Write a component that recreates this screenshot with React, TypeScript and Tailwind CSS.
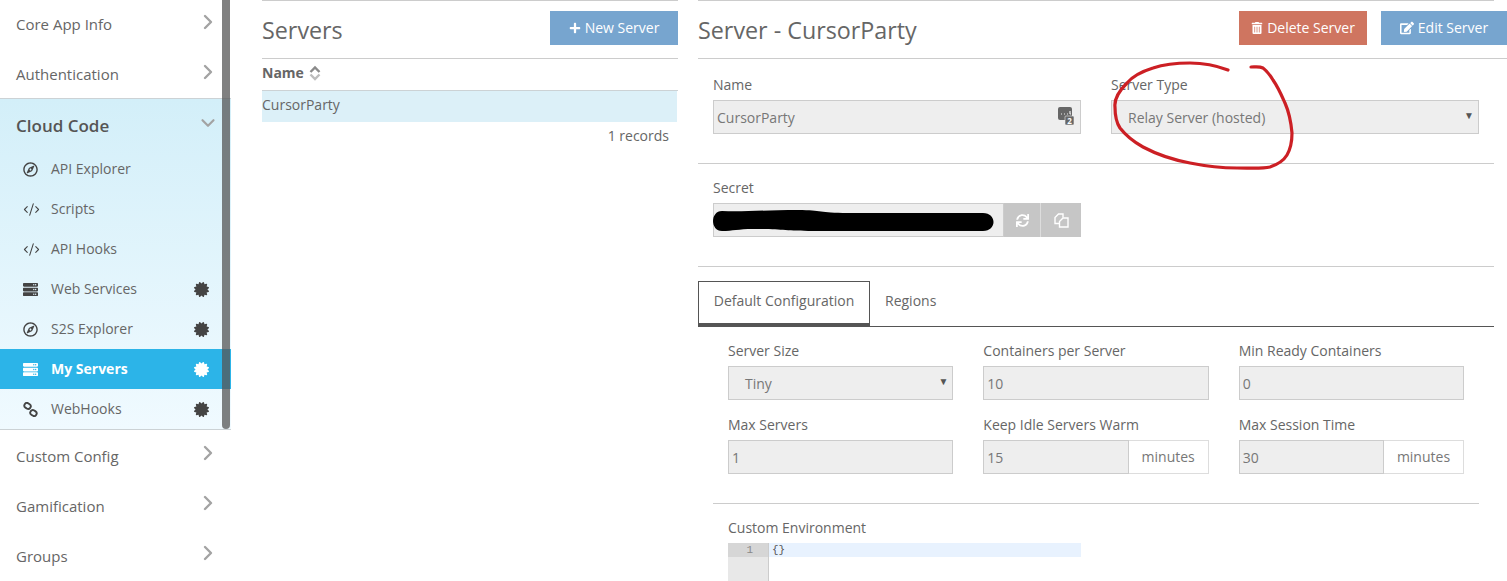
import type { ReactNode } from "react";
import { ChevronRight, ChevronDown, CodeXml } from "lucide-react";
import { FaCertificate, FaEdit, FaPlus, FaRegCompass, FaServer, FaSync, FaTrashAlt } from "react-icons/fa";

function LinkIcon({ className }: { className?: string }) {
  return (
    <svg viewBox="0 0 16 16" className={className} fill="none" stroke="currentColor" strokeWidth="2">
      <rect x="1.5" y="1.5" width="7" height="5.5" rx="2.7" transform="rotate(35 5 4)" />
      <rect x="7.5" y="9" width="7" height="5.5" rx="2.7" transform="rotate(35 11 12)" />
    </svg>
  );
}

function CounterIcon() {
  return (
    <svg viewBox="0 0 16 18" className="h-[18px] w-4 text-[#666]">
      <rect x="0" y="0" width="14" height="13" rx="2" fill="currentColor" />
      <path d="M3 7h1M6 7h1M9 7h1M12 7h1M12 4v3" stroke="#eee" strokeWidth="1.2" />
      <rect x="7" y="9" width="9" height="9" rx="1" fill="currentColor" stroke="#eee" strokeWidth="0.6" />
      <text x="11.5" y="16.6" fontSize="8" fontWeight="700" textAnchor="middle" fill="#fff">2</text>
    </svg>
  );
}

function SortIcon() {
  return (
    <svg viewBox="0 0 12 16" className="h-4 w-3" fill="none" strokeWidth="2.4">
      <path d="M1.5 7 6 2.5 10.5 7" stroke="#8a8a8a" />
      <path d="M1.5 9.5 6 14l4.5-4.5" stroke="#bdbdbd" />
    </svg>
  );
}

function CopyIcon() {
  return (
    <svg viewBox="0 0 15 15" className="h-[15px] w-[15px]" fill="none" stroke="currentColor" strokeWidth="1.4">
      <path d="M9 4.5V1H4.5L1 4.5V10.5H5.5" />
      <path d="M9 5H14V14H5.5V8.5Z" />
    </svg>
  );
}

const subItems = [
  { label: "API Explorer", icon: <FaRegCompass className="h-[15px] w-[15px]" /> },
  { label: "Scripts", icon: <CodeXml className="h-[17px] w-[17px]" strokeWidth={1.5} /> },
  { label: "API Hooks", icon: <CodeXml className="h-[17px] w-[17px]" strokeWidth={1.5} /> },
  { label: "Web Services", icon: <FaServer className="h-[15px] w-[15px]" />, badge: true },
  { label: "S2S Explorer", icon: <FaRegCompass className="h-[15px] w-[15px]" />, badge: true },
  { label: "My Servers", icon: <FaServer className="h-[15px] w-[15px]" />, badge: true, active: true },
  { label: "WebHooks", icon: <LinkIcon className="h-[15px] w-[15px]" />, badge: true },
];

function NavRow({ label, top }: { label: string; top?: boolean }) {
  return (
    <div className={`flex h-[50px] items-center justify-between pl-4 pr-[11px] text-[15px] text-[#666] ${top ? "pb-[2px]" : "pt-[2px]"}`}>
      <span>{label}</span>
      <ChevronRight className={`h-6 w-6 text-[#a3a3a3] ${top ? "mb-1" : "mb-[6px]"}`} strokeWidth={2.4} />
    </div>
  );
}

function Sidebar() {
  return (
    <aside className="relative w-[231px] shrink-0">
      <NavRow label="Core App Info" top />
      <div className="h-[48px]">
        <NavRow label="Authentication" top />
      </div>
      <div className="h-[332px] border-y border-[#ccd2d5] bg-gradient-to-b from-[#d3eff9] to-[#f0faff]">
        <div className="flex h-[50px] w-[222px] items-center justify-between pl-4 pr-[3px] pt-1 text-[#555]">
          <span className="text-[17px] font-semibold">Cloud Code</span>
          <ChevronDown className="mb-[6px] h-[22px] w-[22px] text-[#a3a3a3]" strokeWidth={2.4} />
        </div>
        {subItems.map((item) => (
          <div
            key={item.label}
            className={`flex h-10 items-center pl-[23px] text-sm ${
              item.active ? "bg-[#2cb4e8] font-bold text-white" : "text-[#666]"
            }`}
          >
            <span className={`flex w-[28px] items-center ${item.active ? "text-white" : "text-[#444]"}`}>{item.icon}</span>
            <span className="flex-1">{item.label}</span>
            {item.badge && (
              <FaCertificate className={`mr-[22px] h-[15px] w-[15px] ${item.active ? "text-white" : "text-[#444]"}`} />
            )}
          </div>
        ))}
      </div>
      <NavRow label="Custom Config" />
      <NavRow label="Gamification" />
      <NavRow label="Groups" />
      <div className="absolute left-[222px] top-0 h-[429px] w-[8px] rounded-b bg-[#555]/75" />
    </aside>
  );
}

function Button({ color, icon, children, width }: { color: string; icon: ReactNode; children: ReactNode; width: string }) {
  return (
    <button className={`flex h-[34px] items-center justify-center gap-1 text-sm text-white ${color} ${width}`}>
      {icon}
      {children}
    </button>
  );
}

function ServersPanel() {
  return (
    <section className="ml-[31px] w-[416px] shrink-0 border-t border-[#ccc]">
      <div className="flex h-[58px] items-center justify-between border-b border-[#ccc] pt-px">
        <h2 className="text-[23.3px] text-[#666]">Servers</h2>
        <div className="mb-1">
          <Button color="bg-[#77a5cf]" width="w-32" icon={<FaPlus className="h-3 w-3" />}>New Server</Button>
        </div>
      </div>
      <div className="flex h-[32px] items-center gap-[5px] border-b border-[#ccd2d5] pb-1 text-sm font-bold text-[#666]">
        Name <SortIcon />
      </div>
      <div className="flex h-[31px] w-[415px] items-center bg-[#dcf0f8] pb-[3px] text-sm text-[#666]">CursorParty</div>
      <div className="mt-1 pr-[9px] text-right text-sm text-[#666]">1 records</div>
    </section>
  );
}

const controlClass = "h-[34px] w-full border border-[#ccc] bg-[#eee] text-sm text-[#777] outline-none";

function Field({ label, children, className }: { label: string; children: ReactNode; className?: string }) {
  return (
    <div className={className}>
      <div className="mb-[5px] h-5 text-sm leading-5 text-[#666]">{label}</div>
      {children}
    </div>
  );
}

function TextField({ label, value }: { label: string; value: string }) {
  return (
    <Field label={label}>
      <input readOnly value={value} className={`${controlClass} pl-[3px]`} />
    </Field>
  );
}

function SelectField({ label, value, indent }: { label: string; value: string; indent: string }) {
  return (
    <Field label={label}>
      <div className={`relative flex items-center pt-px ${controlClass} ${indent}`}>
        {value}
        <span className="absolute right-[4px] top-[7px] text-[10px] text-[#555]">▼</span>
      </div>
    </Field>
  );
}

function MinutesField({ label, value }: { label: string; value: string }) {
  return (
    <Field label={label}>
      <div className="flex h-[34px]">
        <input readOnly value={value} className={`${controlClass} min-w-0 flex-1 pl-[3px]`} />
        <div className="flex w-[80px] items-center justify-center border border-l-0 border-[#ddd] text-sm text-[#777]">minutes</div>
      </div>
    </Field>
  );
}

function DetailPanel() {
  return (
    <section className="ml-5 w-[796px] shrink-0 border-t border-[#ccc]">
      <div className="flex h-[58px] w-[809px] items-center justify-between border-b border-[#ccc] pt-px">
        <h2 className="text-[23.3px] text-[#666]">Server - CursorParty</h2>
        <div className="mb-1 flex gap-[14px]">
          <Button color="bg-[#cf7560]" width="w-32" icon={<FaTrashAlt className="h-3 w-3" />}>Delete Server</Button>
          <Button color="bg-[#77a5cf]" width="w-[126px]" icon={<FaEdit className="h-[14px] w-[14px]" />}>Edit Server</Button>
        </div>
      </div>

      <div className="grid h-[105px] grid-cols-[368px_368px] gap-x-[30px] border-b border-[#ccc] pl-[15px] pt-[16px]">
        <Field label="Name">
          <div className="relative">
            <input readOnly value="CursorParty" className={`${controlClass} pl-[3px]`} />
            <span className="absolute right-[7px] top-[7px]"><CounterIcon /></span>
          </div>
        </Field>
        <SelectField label="Server Type" value="Relay Server (hosted)" indent="pl-4" />
      </div>

      <div className="h-[103px] border-b border-[#ccc] pl-[15px] pt-[14px]">
        <Field label="Secret" className="w-[368px]">
          <div className="relative flex h-[34px]">
            <div className="h-full flex-1 border border-[#ccc] bg-[#eee]" />
            <div className="flex w-[37px] items-center justify-center border-r border-[#ddd] bg-[#c6c6c6] text-white"><FaSync className="h-[13px] w-[13px]" /></div>
            <div className="flex w-10 items-center justify-center bg-[#c6c6c6] text-white"><CopyIcon /></div>
            <svg viewBox="0 0 282 22" className="absolute left-0 top-[6px] h-[22px] w-[282px]">
              <path d="M9 2C30 3 50 1 85 1c25 0 20 3 50 3h135c14 0 14 18 0 18H100c-30 0-30-2-60-2-15 0-20 2-31 2C-3 22-3 2 9 2Z" fill="#000" />
            </svg>
          </div>
        </Field>
      </div>

      <div className="mt-[14px] flex h-[46px] border-b border-[#555]">
        <div className="flex h-[46px] w-[172px] items-center justify-center border border-b-[4px] border-[#555] bg-white pb-1 text-sm text-[#666]">Default Configuration</div>
        <div className="flex h-10 items-center pl-[15px] text-sm text-[#666]">Regions</div>
      </div>

      <div className="ml-[30px] mt-[14px] grid w-[736px] grid-cols-3 gap-x-[30px] gap-y-[15px]">
        <SelectField label="Server Size" value="Tiny" indent="pl-4" />
        <TextField label="Containers per Server" value="10" />
        <TextField label="Min Ready Containers" value="0" />
        <TextField label="Max Servers" value="1" />
        <MinutesField label="Keep Idle Servers Warm" value="15" />
        <MinutesField label="Max Session Time" value="30" />
      </div>

      <div className="ml-[15px] mt-[29px] w-[766px] border-t border-[#ccc] pl-[15px] pt-[14px]">
        <div className="mb-[5px] h-5 text-sm leading-5 text-[#666]">Custom Environment</div>
        <div className="flex h-[60px] w-[353px]">
          <div className="w-[41px] border-r border-[#ccc] bg-[#e8e8e8]">
            <div className="h-[14px] bg-[#d6d6d6] pr-[15px] text-right font-['Liberation_Mono',monospace] text-[11px] leading-[14px] text-[#888]">1</div>
          </div>
          <div className="h-[14px] flex-1 bg-[#e8f2fe] pl-[3px] font-['Liberation_Mono',monospace] text-[11px] leading-[14px] text-[#555]">{"{}"}</div>
        </div>
      </div>
    </section>
  );
}

export default function App() {
  return (
    <div className="relative flex h-[581px] w-[1507px] overflow-hidden bg-white font-['Open_Sans',sans-serif]">
      <Sidebar />
      <ServersPanel />
      <DetailPanel />
      {/* hand drawn annotation on top of the screenshot */}
      <svg className="pointer-events-none absolute left-0 top-0 h-[581px] w-[1507px]" fill="none">
        <path
          d="M1228 70C1215 65 1205 63 1190 63C1175 63 1162 65 1153 68C1140 72 1132 77 1127 83C1118 92 1114 99 1115 107C1115 115 1116 122 1120 128C1127 137 1134 142 1143 147C1158 155 1174 160 1190 163C1205 166 1220 168 1237 168C1250 168 1262 169 1270 167C1279 164 1284 160 1287 155C1291 148 1292 141 1292 133C1291 122 1289 112 1285 103C1281 94 1278 87 1273 80C1270 75 1267 71 1263 68C1259 66 1255 67 1251 67"
          stroke="#cc1f24"
          strokeWidth="3.2"
          strokeLinecap="round"
        />
      </svg>
    </div>
  );
}
